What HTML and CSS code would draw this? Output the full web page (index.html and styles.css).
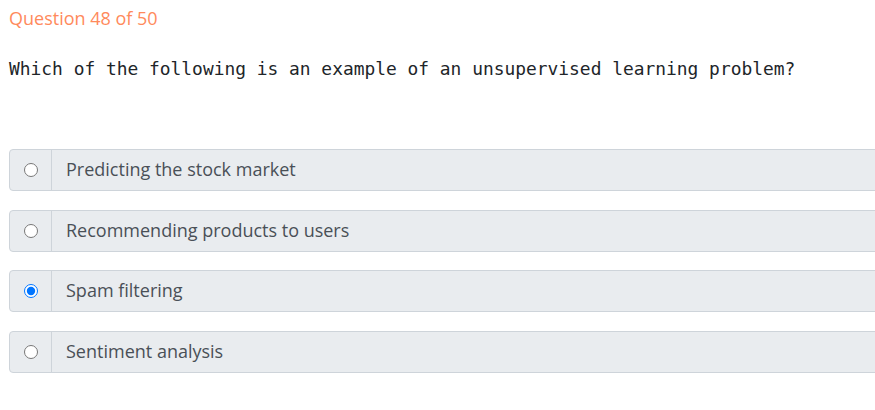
FILE: index.html
```html
<!DOCTYPE html>
<html>
<head>
<meta charset="utf-8">
<link rel="stylesheet" href="styles.css">
</head>
<body>
<div class="quiz">
  <div class="counter">Question 48 of 50</div>
  <div class="question">Which of the following is an example of an unsupervised learning problem?</div>
  <div class="options">
    <label class="option">
      <span class="radio-cell"><input type="radio" name="q48"></span>
      <span class="option-text">Predicting the stock market</span>
    </label>
    <label class="option">
      <span class="radio-cell"><input type="radio" name="q48"></span>
      <span class="option-text">Recommending products to users</span>
    </label>
    <label class="option">
      <span class="radio-cell"><input type="radio" name="q48" checked></span>
      <span class="option-text">Spam filtering</span>
    </label>
    <label class="option">
      <span class="radio-cell"><input type="radio" name="q48"></span>
      <span class="option-text">Sentiment analysis</span>
    </label>
  </div>
</div>
</body>
</html>
```
FILE: styles.css
```css
html, body {
  margin: 0;
  padding: 0;
  background: #ffffff;
  overflow: hidden;
}
body {
  font-family: "Open Sans", "Noto Sans", sans-serif;
}
.quiz {
  padding: 6px 0 0 9px;
}
.counter {
  font-size: 18px;
  line-height: 24px;
  color: #ff8a5c;
}
.question {
  margin-top: 27px;
  font-family: "DejaVu Sans Mono", "Liberation Mono", monospace;
  font-size: 17.9px;
  line-height: 24px;
  color: #212529;
}
.options {
  margin-top: 68px;
  display: flex;
  flex-direction: column;
  gap: 18.67px;
  margin-right: -20px;
}
.option {
  display: flex;
  height: 42px;
  box-sizing: border-box;
  border: 1px solid #ced4da;
  border-radius: 4px;
  background: #e9ecef;
}
.radio-cell {
  width: 41px;
  flex: none;
  display: flex;
  align-items: center;
  justify-content: center;
  border-right: 1px solid #ced4da;
}
.radio-cell input {
  margin: 0;
  width: 14px;
  height: 14px;
}
.option-text {
  display: flex;
  align-items: center;
  padding-left: 14px;
  padding-bottom: 2px;
  font-size: 18px;
  color: #495057;
}
```
